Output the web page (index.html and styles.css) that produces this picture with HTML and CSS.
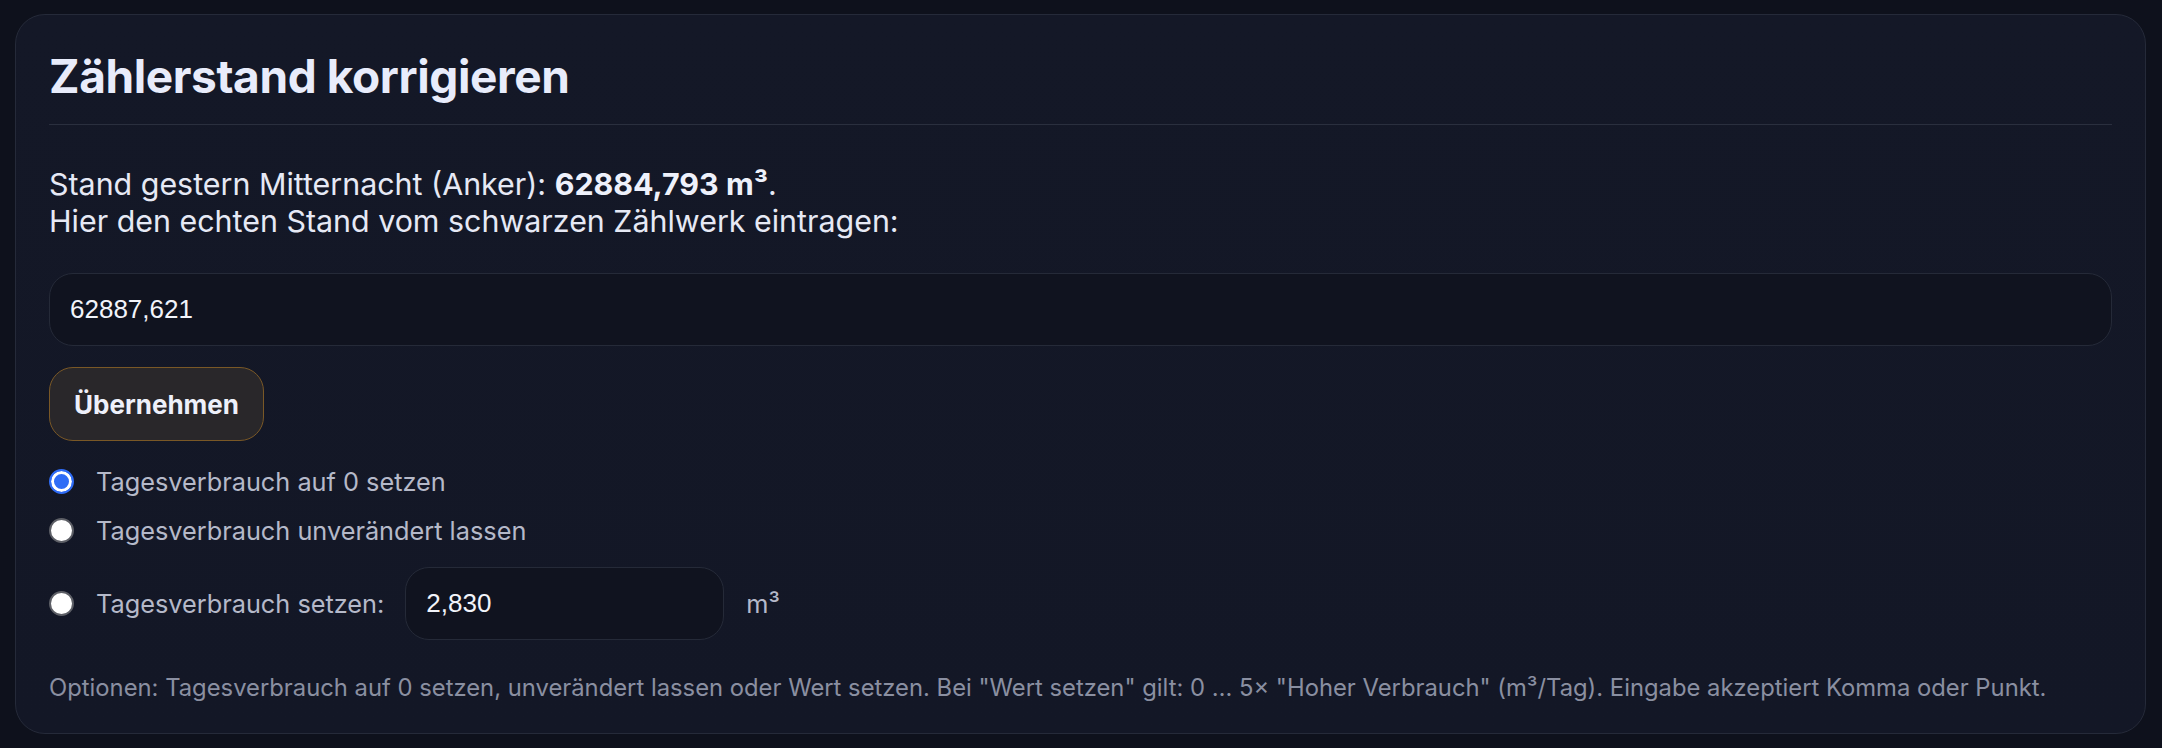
FILE: index.html
```html
<!DOCTYPE html>
<html lang="de">
<head>
<meta charset="utf-8">
<title>Zählerstand korrigieren</title>
<link rel="stylesheet" href="styles.css">
</head>
<body>
<section class="card">
  <h1 class="title">Zählerstand korrigieren</h1>
  <p class="intro">Stand gestern Mitternacht (Anker): <strong>62884,793 m³</strong>.<br>Hier den echten Stand vom schwarzen Zählwerk eintragen:</p>
  <input class="field field-wide" type="text" value="62887,621">
  <div class="actions"><button class="btn" type="button">Übernehmen</button></div>
  <div class="options">
    <label class="opt"><input class="radio" type="radio" name="mode" checked><span>Tagesverbrauch auf 0 setzen</span></label>
    <label class="opt"><input class="radio" type="radio" name="mode"><span>Tagesverbrauch unverändert lassen</span></label>
    <label class="opt"><input class="radio" type="radio" name="mode"><span>Tagesverbrauch setzen:</span><input class="field field-small" type="text" value="2,830"><span class="unit">m³</span></label>
  </div>
  <p class="note">Optionen: Tagesverbrauch auf 0 setzen, unverändert lassen oder Wert setzen. Bei "Wert setzen" gilt: 0 … 5× "Hoher Verbrauch" (m³/Tag). Eingabe akzeptiert Komma oder Punkt.</p>
</section>
</body>
</html>
```
FILE: styles.css
```css
html, body {
  margin: 0;
  height: 100%;
}
body {
  background: #0e111c;
  padding: 14px 16px 0 15px;
  box-sizing: border-box;
  font-family: Inter, "Noto Sans", sans-serif;
  color: #e6e9f5;
}
.card {
  box-sizing: border-box;
  width: 100%;
  border: 1px solid #252a39;
  border-radius: 30px;
  background: linear-gradient(180deg, #141827 0%, #131726 100%);
  padding: 33px 33px 29px 33px;
}
.title {
  margin: 0;
  font-size: 46px;
  line-height: 56px;
  font-weight: 700;
  letter-spacing: -0.4px;
  color: #e8ecfb;
  padding-bottom: 20px;
  border-bottom: 1px solid #2a2f3e;
}
.intro {
  margin: 41px 0 0 0;
  font-size: 30.4px;
  line-height: 37px;
  color: #e6e9f5;
}
.intro strong {
  font-weight: 700;
  color: #eef1fb;
}
.field {
  box-sizing: border-box;
  display: block;
  height: 73px;
  border: 1.5px solid #252a38;
  background: #10131f;
  color: #f2f4fa;
  font-family: "Liberation Sans", Arial, sans-serif;
  font-size: 26px;
  padding: 0 20px;
  border-radius: 24px;
  outline: none;
}
.field-wide {
  width: 100%;
  margin-top: 33px;
}
.actions {
  margin-top: 21px;
  display: flex;
}
.btn {
  box-sizing: border-box;
  height: 74px;
  width: 215px;
  border: 1.5px solid #7a5826;
  background: #29272a;
  color: #eef0fa;
  border-radius: 24px;
  font-family: Inter, "Noto Sans", sans-serif;
  font-weight: 700;
  font-size: 26px;
  padding: 0;
}
.options {
  margin-top: 28px;
  display: flex;
  flex-direction: column;
  gap: 24px;
}
.opt {
  display: flex;
  align-items: center;
  min-height: 25px;
  font-size: 25.3px;
  line-height: 25px;
  color: #b5b9c9;
}
.radio {
  appearance: none;
  -webkit-appearance: none;
  margin: 0 22px 0 0;
  width: 25px;
  height: 25px;
  border-radius: 50%;
  background: #ffffff;
  border: 2px solid #5d5f66;
  flex: none;
}
.radio:checked {
  background: #2f6cf6;
  border: 2px solid #2f6cf6;
  box-shadow: inset 0 0 0 3px #ffffff;
}
.field-small {
  width: 319px;
  margin-left: 21px;
}
.unit {
  margin-left: 22px;
}
.note {
  margin: 32px 0 0 0;
  font-size: 23.8px;
  line-height: 32px;
  color: #8a8fa1;
}
```
